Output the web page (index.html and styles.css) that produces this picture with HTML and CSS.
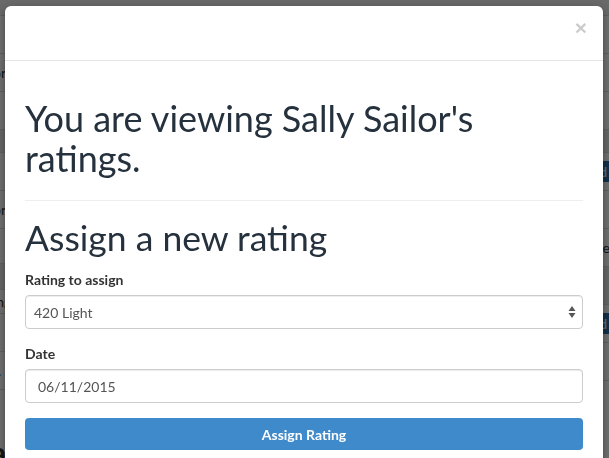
FILE: index.html
```html
<!DOCTYPE html>
<html lang="en">
<head>
    <meta charset="UTF-8">
    <meta name="viewport" content="width=device-width, initial-scale=1.0">
    <title>Sally Sailor's ratings</title>
    <link rel="stylesheet" href="styles.css">
</head>
<body>
    <!-- Page behind the modal -->
    <div class="page">
        <div class="col">
            <div class="row row-top"></div>
            <div class="row h38"><span class="cell">Blue</span></div>
            <div class="row h38"><span class="cell">Sailors</span></div>
            <div class="row h38"><span class="cell bold">Last</span></div>
            <div class="row h23 striped"></div>
            <div class="row h38"><span class="cell">The</span></div>
            <div class="row h38"><span class="cell">Sailor</span></div>
            <div class="row h35"></div>
            <div class="row h26 striped"></div>
            <div class="row h24"><span class="cell">Rating</span></div>
            <div class="row h38"></div>
            <div class="row h38"><span class="cell dot">.</span></div>
            <div class="row h38"></div>
            <div class="row heading"><span class="cell">Ratings</span></div>
        </div>
        <div class="col col-right">
            <div class="row row-top"></div>
            <div class="row h38"></div>
            <div class="row h38"></div>
            <div class="row h38"></div>
            <div class="row h23 striped"></div>
            <div class="row h38"><span class="btn-mini">Add</span></div>
            <div class="row h38"></div>
            <div class="row h38"><span class="cell-right">Rate</span></div>
            <div class="row h38 striped"></div>
            <div class="row h38"><span class="btn-mini">Add</span></div>
            <div class="row h38"></div>
            <div class="row h38"></div>
        </div>
    </div>

    <div class="backdrop"></div>

    <!-- Rating modal -->
    <div class="modal">
        <div class="modal-header">
            <button class="close" type="button">&times;</button>
        </div>
        <div class="modal-body">
            <h1>You are viewing Sally Sailor's ratings.</h1>
            <hr>
            <h2>Assign a new rating</h2>
            <form id="ratingForm">
                <div class="form-group">
                    <label for="rating">Rating to assign</label>
                    <div class="select-wrap">
                        <select id="rating" class="form-control">
                            <option>420 Light</option>
                            <option>420 Heavy</option>
                            <option>Laser</option>
                        </select>
                        <svg class="select-arrows" width="8" height="14" viewBox="0 0 8 14">
                            <path d="M4 1 L7.5 6 L0.5 6 Z" fill="#555"/>
                            <path d="M4 13 L7.5 8 L0.5 8 Z" fill="#555"/>
                        </svg>
                    </div>
                </div>
                <div class="form-group">
                    <label for="date">Date</label>
                    <input id="date" class="form-control date-input" type="text" value="06/11/2015">
                </div>
                <button type="submit" class="btn-primary">Assign Rating</button>
            </form>
        </div>
    </div>
</body>
</html>
```

FILE: styles.css
```css
body {
    margin: 0;
    font-family: Lato, "Open Sans", sans-serif;
    font-size: 14px;
    color: #333;
    background-color: #fff;
    overflow: hidden;
    height: 458px;
}
.page {
    display: grid;
    grid-template-columns: 1fr 1fr;
}
.col {
    display: flex;
    flex-direction: column;
}
.row {
    box-sizing: border-box;
    height: 38px;
    border-top: 1px solid #ddd;
    display: flex;
    align-items: center;
    font-size: 14px;
}
.col-right .row {
    justify-content: flex-end;
}
.h38 { height: 38px; }
.h35 { height: 35px; }
.h26 { height: 26px; }
.h24 { height: 24px; }
.h23 { height: 23px; }
.row-top {
    height: 15px;
    border-top: none;
    background-color: #f0f0f0;
}
.row.striped {
    background-color: #ebebeb;
}
.row.heading {
    height: 50px;
    font-size: 30px;
    font-weight: bold;
    border-top: none;
}
.cell {
    margin-left: -28px;
    color: #333;
}
.cell.bold {
    font-weight: bold;
}
.cell.dot {
    margin-left: -2px;
    color: #2a6aa0;
}
.cell-right {
    margin-right: -1px;
}
.btn-mini {
    margin-right: -4px;
    padding: 2px 6px;
    font-size: 14px;
    color: #fff;
    background-color: #2f6fa8;
    border-radius: 3px;
}
.backdrop {
    position: fixed;
    inset: 0;
    background-color: rgba(0, 0, 0, 0.56);
}
.modal {
    position: absolute;
    top: 6px;
    left: 5px;
    width: 598px;
    height: 470px;
    background-color: #fff;
    border-radius: 6px;
    box-shadow: 0 3px 9px rgba(0, 0, 0, 0.4);
}
.modal-header {
    height: 54px;
    border-bottom: 1px solid #e5e5e5;
    display: flex;
    justify-content: flex-end;
    align-items: flex-start;
    padding: 0 16px;
}
.close {
    margin-top: 11px;
    padding: 0;
    border: none;
    background: none;
    font-family: "Helvetica Neue", "Liberation Sans", Arial, sans-serif;
    font-size: 21px;
    font-weight: bold;
    line-height: 1;
    color: #000;
    opacity: 0.2;
    cursor: pointer;
}
.modal-body {
    padding: 20px;
    color: #25313d;
}
h1 {
    font-size: 36px;
    font-weight: normal;
    line-height: 1.1;
    margin: 18px 0 0;
}
hr {
    border: none;
    border-top: 1px solid #eee;
    margin: 22px 0 0;
}
h2 {
    font-size: 35.5px;
    font-weight: normal;
    line-height: 1.1;
    margin: 17px 0 13px;
}
.form-group {
    margin-bottom: 15px;
}
label {
    display: block;
    font-weight: bold;
    color: #333;
    margin-bottom: 5px;
    line-height: 20px;
}
.form-control {
    display: block;
    box-sizing: border-box;
    width: 100%;
    height: 34px;
    padding: 6px 8px;
    font-family: inherit;
    font-size: 14px;
    color: #555;
    background-color: #fff;
    border: 1px solid #ccc;
    border-radius: 4px;
    box-shadow: inset 0 1px 1px rgba(0, 0, 0, 0.075);
}
.date-input {
    padding-left: 12px;
}
select.form-control {
    appearance: none;
    -webkit-appearance: none;
}
.select-wrap {
    position: relative;
}
.select-arrows {
    position: absolute;
    right: 7px;
    top: 10px;
}
.btn-primary {
    display: block;
    width: 100%;
    height: 32px;
    font-family: inherit;
    font-size: 14px;
    font-weight: bold;
    color: #fff;
    background-color: #3f8acb;
    border: none;
    border-radius: 4px;
    cursor: pointer;
}
.btn-primary:hover {
    background-color: #3479b5;
}
```
